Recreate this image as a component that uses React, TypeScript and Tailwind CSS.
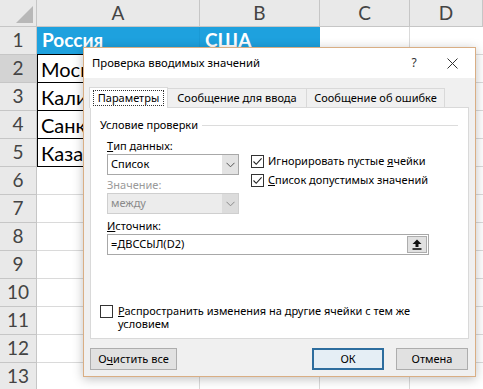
import React from 'react';

const ROWS = [
  { n: 1, a: 'Россия', b: 'США', head: true },
  { n: 2, a: 'Москва', b: '' },
  { n: 3, a: 'Калининград', b: '' },
  { n: 4, a: 'Санкт-Петербург', b: '' },
  { n: 5, a: 'Казань', b: '' },
  { n: 6 }, { n: 7 }, { n: 8 }, { n: 9 }, { n: 10 }, { n: 11 }, { n: 12 }, { n: 13 },
];

function Checkbox({ checked }: { checked?: boolean }) {
  return (
    <span className="flex h-[13px] w-[13px] shrink-0 items-center justify-center border border-[#333] bg-white">
      {checked && (
        <svg width="11" height="11" viewBox="0 0 11 11">
          <path d="M1.5 5.5 L4.2 8.3 L9.6 2.3" fill="none" stroke="#222" strokeWidth="1.1" />
        </svg>
      )}
    </span>
  );
}

function Combo({ value, disabled }: { value: string; disabled?: boolean }) {
  return (
    <div
      className={`flex h-[21px] w-[132px] items-stretch border ${
        disabled ? 'border-[#cfcfcf] bg-[#ececec] text-[#8a8a8a]' : 'border-[#a8a8a8] bg-white text-black'
      }`}
    >
      <span className="flex flex-1 items-center pl-[3px]">{value}</span>
      <span className={`flex w-[16px] items-center justify-center ${disabled ? 'bg-[#dcdcdc]' : 'bg-[#e3e3e3]'}`}>
        <svg width="9" height="6" viewBox="0 0 9 6">
          <path d="M0.5 0.8 L4.5 4.8 L8.5 0.8" fill="none" stroke={disabled ? '#8a8a8a' : '#555'} strokeWidth="1" />
        </svg>
      </span>
    </div>
  );
}

function Sheet() {
  return (
    <div
      className="grid h-[389px] w-[483px] grid-cols-[37px_163px_120px_90px_1fr] grid-rows-[27px_repeat(13,28px)] overflow-hidden bg-white text-[#333]"
      style={{ fontFamily: 'Lato, "Liberation Sans", sans-serif' }}
    >
      <div className="relative border-b border-r border-[#c6c6c6] bg-[#e9e9e9]">
        <svg className="absolute bottom-[3px] right-[3px]" width="17" height="17" viewBox="0 0 17 17">
          <path d="M17 0 L17 17 L0 17 Z" fill="#b8b8b8" />
        </svg>
      </div>
      {['A', 'B', 'C', 'D'].map((c) => (
        <div
          key={c}
          className="flex items-center justify-center border-b border-r border-[#c6c6c6] bg-[#e9e9e9] text-[19px] text-[#444]"
        >
          {c}
        </div>
      ))}
      {ROWS.map((r) => (
        <React.Fragment key={r.n}>
          <div
            className={`flex items-center justify-center border-b border-r border-[#c6c6c6] text-[19px] text-[#444] ${
              r.n === 2 ? 'bg-[#d3d3d3]' : 'bg-[#e9e9e9]'
            }`}
          >
            {r.n}
          </div>
          {r.head ? (
            <>
              <div className="flex items-center border-b border-r border-[#1a9ad6] bg-[#1ea1de] pl-[5px] text-[19px] font-bold text-white">
                {r.a}
              </div>
              <div className="flex items-center border-b border-[#1a9ad6] bg-[#1ea1de] pl-[5px] text-[19px] font-bold text-white">
                {r.b}
              </div>
            </>
          ) : r.a ? (
            <>
              <div className="-mt-px flex items-center overflow-hidden whitespace-nowrap border border-black pl-[3px] text-[20px] text-black">
                {r.a}
              </div>
              <div className="border-b border-r border-[#dadada]" />
            </>
          ) : (
            <>
              <div className="border-b border-r border-[#dadada]" />
              <div className="border-b border-r border-[#dadada]" />
            </>
          )}
          <div className="border-b border-r border-[#dadada]" />
          <div className="border-b border-[#dadada]" />
        </React.Fragment>
      ))}
    </div>
  );
}

function Dialog() {
  return (
    <div
      className="absolute left-[83px] top-[47px] flex h-[330px] w-[393px] flex-col border border-[#d9ae84] bg-[#f0f0f0] text-[11px] text-black shadow-[0_2px_10px_rgba(0,0,0,0.25)]"
      style={{ fontFamily: '"Noto Sans", "Open Sans", sans-serif' }}
    >
      {/* title bar */}
      <div className="flex h-[30px] items-center bg-white">
        <span className="flex-1 pl-[8px] text-[11.3px]">Проверка вводимых значений</span>
        <span className="w-[30px] text-center text-[12px] text-[#333]">?</span>
        <span className="flex h-[30px] w-[46px] items-center justify-center">
          <svg width="11" height="11" viewBox="0 0 11 11">
            <path d="M0.5 0.5 L10.5 10.5 M10.5 0.5 L0.5 10.5" stroke="#333" strokeWidth="1" />
          </svg>
        </span>
      </div>

      {/* tabs */}
      <div className="mt-[9px] flex items-end pl-[5px]">
        <div className="relative z-10 -mb-px flex h-[21px] w-[79px] items-center justify-center border border-b-0 border-[#d9d9d9] bg-white">
          <span className="border border-dotted border-[#333] px-[4px] leading-[14px]">Параметры</span>
        </div>
        <div className="flex h-[19px] w-[139px] items-center justify-center border border-l-0 border-b-0 border-[#d9d9d9] bg-[#f0f0f0]">
          Сообщение для ввода
        </div>
        <div className="flex h-[19px] w-[138px] items-center justify-center border border-l-0 border-b-0 border-[#d9d9d9] bg-[#f0f0f0]">
          Сообщение об ошибке
        </div>
      </div>

      {/* panel */}
      <div className="ml-[6px] flex h-[232px] w-[379px] flex-col border border-[#d9d9d9] bg-white">
        <div className="mt-[9px] flex h-[16px] items-center pl-[9px] pr-[10px]">
          <span>Условие проверки</span>
          <span className="ml-[4px] h-px flex-1 bg-[#dcdcdc]" />
        </div>

        <div className="ml-[16px] mt-[5px] flex">
          <div className="flex w-[132px] flex-col">
            <span className="flex h-[16px] items-center">
              <u>Т</u>ип данных:
            </span>
            <Combo value="Список" />
            <span className="mt-[2px] flex h-[16px] items-center text-[#9a9a9a]">Значение:</span>
            <Combo value="между" disabled />
          </div>
          <div className="ml-[12px] mt-[15px] flex flex-col gap-[3px]">
            <label className="flex h-[16px] items-center gap-[4px]">
              <Checkbox checked />
              <span>
                Игнорировать пустые <u>я</u>чейки
              </span>
            </label>
            <label className="flex h-[16px] items-center gap-[4px]">
              <Checkbox checked />
              <span>
                <u>С</u>писок допустимых значений
              </span>
            </label>
          </div>
        </div>

        <span className="ml-[16px] mt-[4px] flex h-[16px] items-center">
          <u>И</u>сточник:
        </span>
        <div className="ml-[16px] flex h-[21px] w-[322px] items-center border border-[#a8a8a8] bg-white">
          <span className="flex-1 pl-[3px]">=ДВССЫЛ(D2)</span>
          <span className="mr-[1px] flex h-[17px] w-[20px] items-center justify-center border border-[#adadad] bg-[#e1e1e1]">
            <svg width="10" height="11" viewBox="0 0 10 11">
              <path d="M5 0.5 L9.5 5 L6.5 5 L6.5 8 L3.5 8 L3.5 5 L0.5 5 Z" fill="#111" />
              <rect x="0.5" y="9.2" width="9" height="1.6" fill="#111" />
            </svg>
          </span>
        </div>

        <div className="ml-[9px] mt-auto mb-[8px] flex items-start gap-[5px]">
          <span className="mt-[1px]">
            <Checkbox />
          </span>
          <span className="leading-[13px]">
            <u>Р</u>аспространить изменения на другие ячейки с тем же
            <br />
            условием
          </span>
        </div>
      </div>

      {/* buttons */}
      <div className="mt-[9px] flex items-center pl-[6px] pr-[7px]">
        <button className="flex h-[22px] w-[87px] items-center justify-center border border-[#adadad] bg-[#e1e1e1]">
          О<u>ч</u>истить все
        </button>
        <span className="flex-1" />
        <button className="flex h-[22px] w-[72px] items-center justify-center border-2 border-[#2d6d9e] bg-[#e5eef5]">
          ОК
        </button>
        <button className="ml-[12px] flex h-[22px] w-[72px] items-center justify-center border border-[#adadad] bg-[#e1e1e1]">
          Отмена
        </button>
      </div>
    </div>
  );
}

export default function App() {
  return (
    <div className="relative h-[389px] w-[483px] overflow-hidden">
      <Sheet />
      <Dialog />
    </div>
  );
}
